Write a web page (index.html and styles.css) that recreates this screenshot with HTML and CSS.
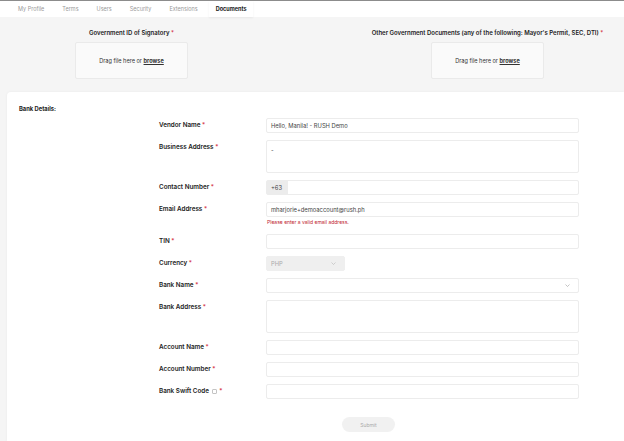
FILE: index.html
```html
<!DOCTYPE html>
<html lang="en">
<head>
    <meta charset="UTF-8">
    <meta name="viewport" content="width=device-width, initial-scale=1.0">
    <title>Vendor Documents</title>
    <link rel="stylesheet" href="styles.css">
</head>
<body>
    <!-- Tabs -->
    <div class="tabs">
        <span class="tab">My Profile</span>
        <span class="tab">Terms</span>
        <span class="tab">Users</span>
        <span class="tab">Security</span>
        <span class="tab">Extensions</span>
        <span class="tab active">Documents</span>
    </div>

    <!-- Uploads -->
    <div class="uploads">
        <div class="upload upload-left">
            <p class="upload-title">Government ID of Signatory <span class="req">*</span></p>
            <div class="dropzone">Drag file here or&nbsp;<b>browse</b></div>
        </div>
        <div class="upload upload-right">
            <p class="upload-title">Other Government Documents (any of the following: Mayor's Permit, SEC, DTI) <span class="req">*</span></p>
            <div class="dropzone">Drag file here or&nbsp;<b>browse</b></div>
        </div>
    </div>

    <!-- Bank details -->
    <div class="card">
        <h2 class="card-title">Bank Details:</h2>
        <div class="form">
            <label>Vendor Name <span class="req">*</span></label>
            <div class="field"><div class="input">Hello, Manila! - RUSH Demo</div></div>

            <label>Business Address <span class="req">*</span></label>
            <div class="field"><div class="input textarea">-</div></div>

            <label>Contact Number <span class="req">*</span></label>
            <div class="field"><div class="input phone"><span class="prefix">+63</span></div></div>

            <label>Email Address <span class="req">*</span></label>
            <div class="field">
                <div class="input">mharjorie+demoaccount@rush.ph</div>
                <p class="error">Please enter a valid email address.</p>
            </div>

            <label>TIN <span class="req">*</span></label>
            <div class="field"><div class="input"></div></div>

            <label>Currency <span class="req">*</span></label>
            <div class="field">
                <div class="input select currency">PHP
                    <svg class="chev" viewBox="0 0 10 6"><path d="M1 1l4 4 4-4" fill="none" stroke="#aaa" stroke-width="1"/></svg>
                </div>
            </div>

            <label>Bank Name <span class="req">*</span></label>
            <div class="field">
                <div class="input select">
                    <svg class="chev" viewBox="0 0 10 6"><path d="M1 1l4 4 4-4" fill="none" stroke="#888" stroke-width="1"/></svg>
                </div>
            </div>

            <label>Bank Address <span class="req">*</span></label>
            <div class="field"><div class="input textarea"></div></div>

            <label>Account Name <span class="req">*</span></label>
            <div class="field"><div class="input"></div></div>

            <label>Account Number <span class="req">*</span></label>
            <div class="field"><div class="input"></div></div>

            <label>Bank Swift Code <span class="info"></span> <span class="req">*</span></label>
            <div class="field"><div class="input"></div></div>
        </div>
        <div class="actions">
            <button class="submit" disabled>Submit</button>
        </div>
    </div>
</body>
</html>
```

FILE: styles.css
```css
body {
    margin: 0;
    font-family: Inter, "Noto Sans", sans-serif;
    background-color: #f5f5f5;
    border-top: 1px solid #8c8c8c;
    color: #222;
}
.tabs {
    display: flex;
    gap: 4px;
    height: 16px;
    padding-left: 11px;
    background-color: #fff;
}
.tab {
    padding: 0 7px;
    font-size: 5.5px;
    line-height: 16px;
    color: #9a9a9a;
}
.tab.active {
    color: #1a1a1a;
    font-weight: 700;
    box-shadow: 0 1px 2px rgba(0, 0, 0, 0.06);
}
.uploads {
    display: grid;
    grid-template-columns: 263px 263px;
    column-gap: 93px;
    padding: 11px 0 13px;
}
.upload {
    display: flex;
    flex-direction: column;
    align-items: center;
}
.upload-title {
    margin: 0 0 4px;
    font-size: 6px;
    line-height: 10px;
    font-weight: 600;
    white-space: nowrap;
}
.req {
    color: #d0112b;
    font-weight: 400;
}
.dropzone {
    width: 113px;
    height: 37px;
    box-sizing: border-box;
    border: 1px solid #eaeaea;
    border-radius: 2px;
    background-color: #fafafa;
    font-size: 5.6px;
    color: #333;
    display: flex;
    align-items: center;
    justify-content: center;
}
.dropzone b {
    text-decoration: underline;
    font-weight: 700;
}
.card {
    margin-left: 7px;
    background-color: #fff;
    border-radius: 4px 0 0 0;
    box-shadow: 0 0 3px rgba(0, 0, 0, 0.05);
    padding: 13px 0 9px 12px;
}
.card-title {
    margin: 0 0 5px;
    font-size: 5.8px;
    line-height: 8px;
    font-weight: 700;
}
.form {
    display: grid;
    grid-template-columns: 107px 313px;
    row-gap: 7px;
    margin-left: 140px;
}
.form label {
    font-size: 6.3px;
    font-weight: 600;
    line-height: 15px;
    color: #222;
}
.input {
    height: 15px;
    box-sizing: border-box;
    border: 1px solid #ececec;
    border-radius: 2px;
    background-color: #fff;
    padding: 0 4px;
    font-size: 5.8px;
    line-height: 13px;
    color: #444;
    position: relative;
}
.textarea {
    height: 33px;
    padding-top: 2px;
}
.phone {
    padding: 0;
}
.prefix {
    display: inline-block;
    width: 21px;
    height: 13px;
    background-color: #ececec;
    padding-left: 4px;
    box-sizing: border-box;
}
.error {
    margin: 0;
    padding: 1px 0 0 1px;
    font-size: 5px;
    line-height: 9px;
    color: #c0212e;
}
.select .chev {
    position: absolute;
    right: 8px;
    top: 5px;
    width: 5px;
    height: 3px;
}
.currency {
    width: 79px;
    background-color: #efefef;
    border-color: #efefef;
    color: #aaa;
}
.info {
    display: inline-block;
    width: 3px;
    height: 3px;
    border: 1px solid #c4c4c4;
    border-radius: 1px;
    vertical-align: middle;
    margin: 0 1px;
}
.actions {
    display: flex;
    padding-left: 323px;
    margin-top: 18px;
}
.submit {
    width: 53px;
    height: 15px;
    border: none;
    border-radius: 8px;
    background-color: #f1f1f1;
    color: #aaa;
    font-family: inherit;
    font-size: 5px;
}
```
